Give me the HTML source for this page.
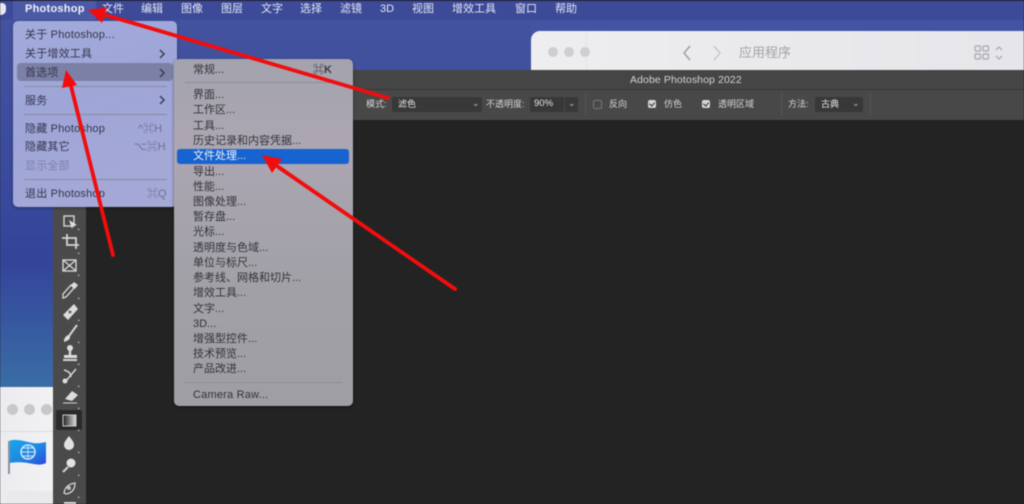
<!DOCTYPE html>
<html><head><meta charset="utf-8"><style>
html,body{margin:0;padding:0;background:#222}
#p{position:relative;width:1024px;height:504px;overflow:hidden;background:#232323;font-family:"Liberation Sans","Noto Sans CJK SC",sans-serif;filter:blur(.55px)}
#p div,#p span{position:absolute;white-space:nowrap}
.m{top:2px;font-size:11px;line-height:14px;color:#e4e6f4}
.a{left:25px;font-size:11px;line-height:14px;color:#35354c;letter-spacing:.2px}
.b{left:193px;font-size:11px;line-height:14px;color:#333336}
.sep{height:1px;background:#8a8a9a}
.o{top:98px;font-size:9px;line-height:12px;color:#d6d6d6}
.dot{width:11px;height:11px;border-radius:50%;background:#cfcfd2}
.chk{width:8px;height:8px;top:100px;border-radius:2px;background:#d6d6d6}
.chk:after{content:"";position:absolute;left:2px;top:1px;width:3px;height:4px;border:solid #333;border-width:0 1.3px 1.3px 0;transform:rotate(40deg)}
.sel{top:97px;height:15px;background:#383838;border-radius:2px}
</style></head><body><div id="p">
<div style="left:0;top:0;width:531px;height:504px;background:linear-gradient(180deg,#44549f 0,#3e4e9e 120px,#34449a 260px,#3a6ea6 390px)"></div>
<div style="left:531px;top:0;width:493px;height:70px;background:#4453a2"></div>
<div style="left:0;top:0;width:1024px;height:20px;background:#3c4a98"></div>
<div style="left:0;top:0;width:1024px;height:1px;background:#23284a"></div>
<div style="left:13px;top:1px;width:83px;height:19px;background:#4c5aa6"></div>
<div style="left:0;top:3px;width:6px;height:12px;border-radius:0 4px 5px 0;background:#e8e8f0"></div>
<div class="m" style="left:25px;font-weight:bold;letter-spacing:.25px;color:#eef0fa">Photoshop</div>
<div class="m" style="left:102px">文件</div><div class="m" style="left:141px">编辑</div><div class="m" style="left:181px">图像</div><div class="m" style="left:221px">图层</div><div class="m" style="left:261px">文字</div><div class="m" style="left:300px">选择</div><div class="m" style="left:340px">滤镜</div><div class="m" style="left:380px">3D</div><div class="m" style="left:412px">视图</div><div class="m" style="left:452px">增效工具</div><div class="m" style="left:515px">窗口</div><div class="m" style="left:555px">帮助</div>

<!-- finder window -->
<div style="left:531px;top:31px;width:493px;height:39px;background:linear-gradient(90deg,#eeeef0,#e6e6ea);border-radius:9px 0 0 0"></div>
<div style="left:586px;top:31px;width:1px;height:39px;background:#e2e2e4"></div>
<div class="dot" style="left:548px;top:47px;width:10px;height:10px"></div><div class="dot" style="left:564px;top:47px;width:10px;height:10px"></div><div class="dot" style="left:580px;top:47px;width:10px;height:10px"></div>
<svg style="position:absolute;left:680px;top:44px" width="50" height="18" fill="none" stroke-width="1.4"><path d="M10 2L4 9l6 7" stroke="#9a9aa0"/><path d="M34 2l6 7-6 7" stroke="#c6c6ca"/></svg>
<div style="left:739px;top:44px;font-size:13px;line-height:18px;color:#a2a2a8">应用程序</div>
<svg style="position:absolute;left:973px;top:44px" width="36" height="20" fill="none" stroke="#a8a8ac" stroke-width="1.2"><rect x="2" y="2" width="5.5" height="5" rx="1"/><rect x="10" y="2" width="5.500" height="5" rx="1"/><rect x="2" y="10" width="5.500" height="5" rx="1"/><rect x="10" y="10" width="5.500" height="5" rx="1"/><path d="M23 6l3-3 3 3M23 12l3 3 3-3"/></svg>

<!-- PS window -->
<div style="top:70px;height:19px;background:#454545;left:53px;width:971px"></div>
<div style="left:53px;top:89px;width:971px;height:1px;background:#383838"></div>
<div style="left:53px;top:90px;width:971px;height:30px;background:#484848"></div>
<div style="left:53px;top:120px;width:971px;height:384px;background:#232323"></div>
<div style="left:630px;top:74px;font-size:10.5px;line-height:13px;color:#d2d2d2;letter-spacing:.1px">Adobe Photoshop 2022</div>
<div class="o" style="left:366px">模式:</div>
<div class="sel" style="left:392px;width:90px"></div><div class="o" style="left:398px;color:#e4e4e4">滤色</div>
<div class="o" style="left:472px;top:97px;color:#bbb">⌄</div>
<div class="o" style="left:486px">不透明度:</div>
<div class="sel" style="left:530px;width:48px"></div><div class="o" style="left:534px;color:#e4e4e4;font-size:9.5px">90%</div><div style="left:564px;top:97px;width:1px;height:15px;background:#484848"></div><div class="o" style="left:568px;top:97px;color:#bbb">⌄</div>
<div style="left:585px;top:93px;width:1px;height:23px;background:#555"></div>
<div style="left:593px;top:100px;width:7px;height:7px;border:1px solid #777;border-radius:2px"></div>
<div class="o" style="left:609px">反向</div>
<div class="chk" style="left:648px"></div><div class="o" style="left:664px">仿色</div>
<div class="chk" style="left:702px"></div><div class="o" style="left:718px">透明区域</div>
<div style="left:781px;top:93px;width:1px;height:23px;background:#555"></div>
<div class="o" style="left:788px">方法:</div>
<div class="sel" style="left:815px;width:48px"></div><div class="o" style="left:821px;color:#e4e4e4">古典</div><div class="o" style="left:852px;top:97px;color:#bbb">⌄</div>
<div style="left:870px;top:93px;width:1px;height:23px;background:#555"></div>

<!-- left bottom window -->
<div style="left:0;top:387px;width:53px;height:117px;background:linear-gradient(90deg,#ececf0,#f2f2f4)"></div>
<div style="left:0;top:431px;width:53px;height:1px;background:#dcdce0"></div>
<div style="left:7px;top:491px;width:46px;height:13px;background:#e9e9ec;border-radius:4px 0 0 0"></div>
<div class="dot" style="left:7px;top:404px;background:#c8c8cc"></div><div class="dot" style="left:24px;top:404px;background:#c8c8cc"></div><div class="dot" style="left:41px;top:404px;background:#c8c8cc"></div>
<svg style="position:absolute;left:6px;top:438px" width="42" height="38"><defs><linearGradient id="f" x1="0" y1="0" x2="1" y2="1"><stop offset="0" stop-color="#17a8ea"/><stop offset=".55" stop-color="#1f86e2"/><stop offset="1" stop-color="#2c49da"/></linearGradient></defs><path d="M3 3C10 0 20 4 27 5c5 1 13-1 13-1l0 21c-6 3-12 1-18 0-6-1-12-1-19 0z" fill="url(#f)"/><rect x="2" y="3" width="2" height="33" fill="#8a929c"/><circle cx="22" cy="14" r="7" fill="none" stroke="#cfe6f8" stroke-width="1.500"/><path d="M15 14h14M22 7v14M17 10h10M17 18h10" stroke="#cfe6f8" stroke-width=".9"/></svg>

<!-- toolbar -->
<div style="left:53px;top:120px;width:33px;height:384px;background:#4a4a4a"></div>
<div style="left:56px;top:410px;width:26px;height:20px;background:#2a2a2a;border-radius:2px"></div>
<svg style="position:absolute;left:53px;top:205px" width="33" height="299" fill="none" stroke="#d4d4d4" stroke-width="1.400">
<rect x="11" y="11" width="10" height="10"/><path d="M16 15l8 5-4 1-1 3z" fill="#ddd" stroke="none"/>
<path d="M9 33h14v11M14 29v11h12" stroke-width="1.800"/>
<rect x="10" y="55" width="13" height="11"/><path d="M10 55l13 11M23 55l-13 11"/>
<path d="M10 93l3-1 8-9-3-3-8 9z"/><path d="M18 80l3-3 4 3-3 4z" fill="#ddd" stroke="none"/>
<path d="M10 110l11-11 4 5-10 11z" fill="#dcdcdc" stroke="none"/><circle cx="17" cy="107" r="1.500" fill="#666" stroke="none"/>
<path d="M11 136c3-1 5-2 5-5l8-11" stroke-width="2"/><path d="M11 135c1-3 3-5 5-5l1 3c-1 2-3 3-6 2z" fill="#ddd" stroke="none"/>
<path d="M10 155h14" stroke-width="2"/><path d="M11 150h13v3H11z" fill="#ddd" stroke="none"/><path d="M17 142v8" stroke-width="2.500"/><circle cx="17" cy="143" r="3" fill="#ddd" stroke="none"/>
<path d="M12 177l11-13M11 165c4 1 7 3 7 7" stroke-width="1.500"/><circle cx="12" cy="176" r="2.500" fill="#ddd" stroke="none"/>
<path d="M12 194l7-8 6 4-6 6z" fill="#ddd" stroke="none"/><path d="M10 198h14" stroke-width="1"/>
<defs><linearGradient id="g"><stop offset="0" stop-color="#222"/><stop offset="1" stop-color="#ddd"/></linearGradient></defs>
<rect x="10" y="210" width="13" height="11" fill="url(#g)" stroke="#ccc" stroke-width="1"/>
<path d="M16 231c-3 4-5 6-5 9a5 5 0 0 0 10 0c0-3-2-5-5-9z" fill="#e2e2e2" stroke="none"/>
<circle cx="18" cy="258" r="4.500" fill="#e2e2e2" stroke="none"/><path d="M15 262l-5 5" stroke-width="2"/>
<path d="M11 288c1-6 5-9 11-10 0 6-3 10-9 11z" stroke-width="1.300"/><circle cx="16" cy="283" r="1.200"/>
<rect x="11" y="297" width="12" height="4" fill="#ddd" stroke="none"/>
<path d="M27 25h-2v-2zM27 49h-2v-2zM27 71h-2v-2zM27 94h-2v-2zM27 116h-2v-2zM27 138h-2v-2zM27 160h-2v-2zM27 182h-2v-2zM27 204h-2v-2zM27 226h-2v-2zM27 248h-2v-2zM27 271h-2v-2zM27 293h-2v-2z" fill="#bbb" stroke="none"/>
</svg>

<!-- menu 1 -->
<div style="left:13px;top:21px;width:164px;height:186px;border-radius:5px;background:linear-gradient(160deg,#a3abdb 0,#9ea6d8 40%,#a6a9d6 100%);box-shadow:0 1px 3px rgba(0,0,0,.35)"></div>
<div style="left:17px;top:63px;width:156px;height:18px;border-radius:4px;background:#7c80a6"></div>
<div class="a" style="top:28px">关于 Photoshop...</div>
<div class="a" style="top:47px">关于增效工具</div>
<div class="a" style="top:66px">首选项</div>
<div class="a" style="top:94px">服务</div>
<div class="a" style="top:122px">隐藏 Photoshop</div>
<div class="a" style="top:140px">隐藏其它</div>
<div class="a" style="top:159px;color:#7d82a8">显示全部</div>
<div class="a" style="top:187px">退出 Photoshop</div>
<div class="sep" style="left:24px;top:86px;width:143px"></div>
<div class="sep" style="left:24px;top:114px;width:143px"></div>
<div class="sep" style="left:24px;top:179px;width:143px"></div>
<svg style="position:absolute;left:158px;top:48px" width="10" height="60" fill="none" stroke="#3c3c55" stroke-width="1.500"><path d="M2 2l4 4-4 4M2 21l4 4-4 4M2 48l4 4-4 4"/></svg>
<div style="left:138px;top:122px;font-size:11px;line-height:14px;color:#6c7096">^⌘H</div>
<div style="left:134px;top:140px;font-size:11px;line-height:14px;color:#6c7096">⌥⌘H</div>
<div style="left:147px;top:187px;font-size:11px;line-height:14px;color:#6c7096">⌘Q</div>

<!-- submenu -->
<div style="left:174px;top:59px;width:179px;height:347px;border-radius:5px;background:linear-gradient(180deg,#a3a3ae 0,#aca6b2 25%,#a2a1a8 60%,#9f9ea4 100%);box-shadow:0 1px 3px rgba(0,0,0,.45)"></div>
<div style="left:177px;top:149px;width:172px;height:15px;border-radius:3px;background:#1763d0"></div>
<div class="b" style="top:63px">常规...</div>
<div style="left:313px;top:63px;font-size:11px;line-height:14px;font-weight:bold;color:#3c3c42">⌘K</div>
<div class="sep" style="left:185px;top:82px;width:157px;background:#8e8e94"></div>
<div class="b" style="top:88px">界面...</div>
<div class="b" style="top:103px">工作区...</div>
<div class="b" style="top:119px">工具...</div>
<div class="b" style="top:134px">历史记录和内容凭据...</div>
<div class="b" style="top:149px;color:#f2f4fa">文件处理...</div>
<div class="b" style="top:165px">导出...</div>
<div class="b" style="top:180px">性能...</div>
<div class="b" style="top:195px">图像处理...</div>
<div class="b" style="top:210px">暂存盘...</div>
<div class="b" style="top:225px">光标...</div>
<div class="b" style="top:241px">透明度与色域...</div>
<div class="b" style="top:256px">单位与标尺...</div>
<div class="b" style="top:271px">参考线、网格和切片...</div>
<div class="b" style="top:286px">增效工具...</div>
<div class="b" style="top:302px">文字...</div>
<div class="b" style="top:317px">3D...</div>
<div class="b" style="top:332px">增强型控件...</div>
<div class="b" style="top:347px">技术预览...</div>
<div class="b" style="top:362px">产品改进...</div>
<div class="sep" style="left:185px;top:382px;width:157px;background:#8e8e94"></div>
<div class="b" style="top:388px;letter-spacing:.2px">Camera Raw...</div>

<!-- arrows -->
<svg style="position:absolute;left:0;top:0" width="1024" height="504" fill="#f10d0d" stroke="none">
<path d="M388 98L102 14" stroke="#f10d0d" stroke-width="3.800" stroke-linecap="round"/><path d="M88 10l19-3-5 16z"/>
<path d="M113 255L70 82" stroke="#f10d0d" stroke-width="3.800" stroke-linecap="round"/><path d="M66 70l11 15-15 3z"/>
<path d="M455 289L274 164" stroke="#f10d0d" stroke-width="3.800" stroke-linecap="round"/><path d="M262 155l20 4-10 14z"/>
</svg>
</div></body></html>
